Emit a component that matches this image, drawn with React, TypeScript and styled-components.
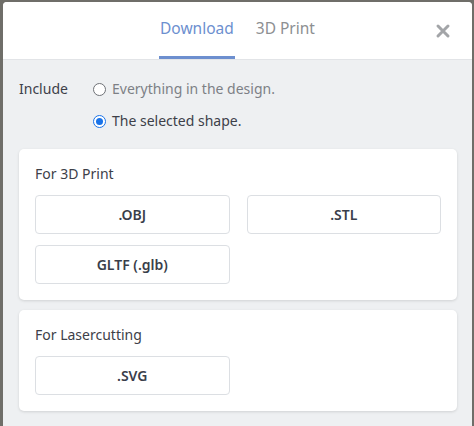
import React, { useState } from "react";
import styled, { createGlobalStyle } from "styled-components";

const GlobalStyle = createGlobalStyle`
  html, body {
    margin: 0;
    padding: 0;
    background: #6f6e69;
    font-family: "Noto Sans", "Open Sans", sans-serif;
  }
  * { box-sizing: border-box; }
`;

const Backdrop = styled.div`
  height: 426px;
  padding: 2px 2px 0 3px;
  overflow: hidden;
`;

const Dialog = styled.div`
  height: 100%;
  background: #eef0f2;
  border-radius: 4px 4px 0 0;
  overflow: hidden;
`;

const Header = styled.div`
  position: relative;
  height: 58px;
  background: #fff;
  border-bottom: 1px solid #e2e4e7;
  display: flex;
  justify-content: center;
  gap: 20px;
`;

const Tab = styled.button<{ $active?: boolean }>`
  border: none;
  background: none;
  padding: 15px 1px 0;
  font-family: inherit;
  font-size: 15.5px;
  color: ${(p) => (p.$active ? "#6d8fcf" : "#8d8f92")};
  border-bottom: 3px solid ${(p) => (p.$active ? "#6d8fcf" : "transparent")};
  display: flex;
  align-items: flex-start;
  cursor: pointer;
`;

const Close = styled.button`
  position: absolute;
  right: 20px;
  top: 20px;
  border: none;
  background: none;
  padding: 0;
  width: 18px;
  height: 18px;
  cursor: pointer;
`;

const Body = styled.div`
  padding: 18px 15px 0 16px;
  display: flex;
  flex-direction: column;
`;

const IncludeRow = styled.div`
  display: grid;
  grid-template-columns: 74px 1fr;
  row-gap: 10px;
  font-size: 14px;
  color: #3d4049;
  margin-bottom: 17px;
`;

const Label = styled.div`
  line-height: 22px;
`;

const Option = styled.label<{ $checked?: boolean }>`
  display: flex;
  align-items: center;
  gap: 6px;
  line-height: 22px;
  color: ${(p) => (p.$checked ? "#3d4049" : "#7d8086")};
  cursor: pointer;
`;

const Radio = styled.span<{ $checked?: boolean }>`
  width: 13px;
  height: 13px;
  border-radius: 50%;
  border: 1px solid ${(p) => (p.$checked ? "#1a73e8" : "#6f7277")};
  background: #fff;
  display: flex;
  align-items: center;
  justify-content: center;
  &::after {
    content: "";
    width: 7px;
    height: 7px;
    border-radius: 50%;
    background: ${(p) => (p.$checked ? "#1a73e8" : "transparent")};
  }
`;

const Card = styled.section`
  background: #fff;
  border-radius: 5px;
  box-shadow: 0 1px 3px rgba(0, 0, 0, 0.13);
  padding: 14px 16px 16px;
  margin-bottom: 10px;
`;

const CardTitle = styled.h3`
  margin: 0 0 10px;
  font-size: 14px;
  font-weight: 400;
  color: #3d4049;
  line-height: 22px;
`;

const Grid = styled.div`
  display: grid;
  grid-template-columns: 1fr 1fr;
  column-gap: 17px;
  row-gap: 11px;
`;

const FormatButton = styled.button`
  height: 39px;
  border: 1px solid #dcdfe3;
  border-radius: 4px;
  background: #fff;
  font-family: inherit;
  font-size: 14px;
  font-weight: 600;
  color: #3a3e4a;
  cursor: pointer;
`;

const groups = [
  { title: "For 3D Print", formats: [".OBJ", ".STL", "GLTF (.glb)"] },
  { title: "For Lasercutting", formats: [".SVG"] },
];

export default function App() {
  const [tab, setTab] = useState("download");
  const [scope, setScope] = useState("selected");

  return (
    <>
      <GlobalStyle />
      <Backdrop>
        <Dialog>
          <Header>
            <Tab $active={tab === "download"} onClick={() => setTab("download")}>
              Download
            </Tab>
            <Tab $active={tab === "print"} onClick={() => setTab("print")}>
              3D Print
            </Tab>
            <Close aria-label="Close">
              <svg width="18" height="18" viewBox="0 0 18 18">
                <path
                  d="M4 4 L14 14 M14 4 L4 14"
                  stroke="#a3a5a8"
                  strokeWidth="3"
                  strokeLinecap="round"
                />
              </svg>
            </Close>
          </Header>
          <Body>
            <IncludeRow>
              <Label>Include</Label>
              <Option $checked={scope === "all"} onClick={() => setScope("all")}>
                <Radio $checked={scope === "all"} />
                Everything in the design.
              </Option>
              <span />
              <Option
                $checked={scope === "selected"}
                onClick={() => setScope("selected")}
              >
                <Radio $checked={scope === "selected"} />
                The selected shape.
              </Option>
            </IncludeRow>
            {groups.map((g) => (
              <Card key={g.title}>
                <CardTitle>{g.title}</CardTitle>
                <Grid>
                  {g.formats.map((f) => (
                    <FormatButton key={f}>{f}</FormatButton>
                  ))}
                </Grid>
              </Card>
            ))}
          </Body>
        </Dialog>
      </Backdrop>
    </>
  );
}
